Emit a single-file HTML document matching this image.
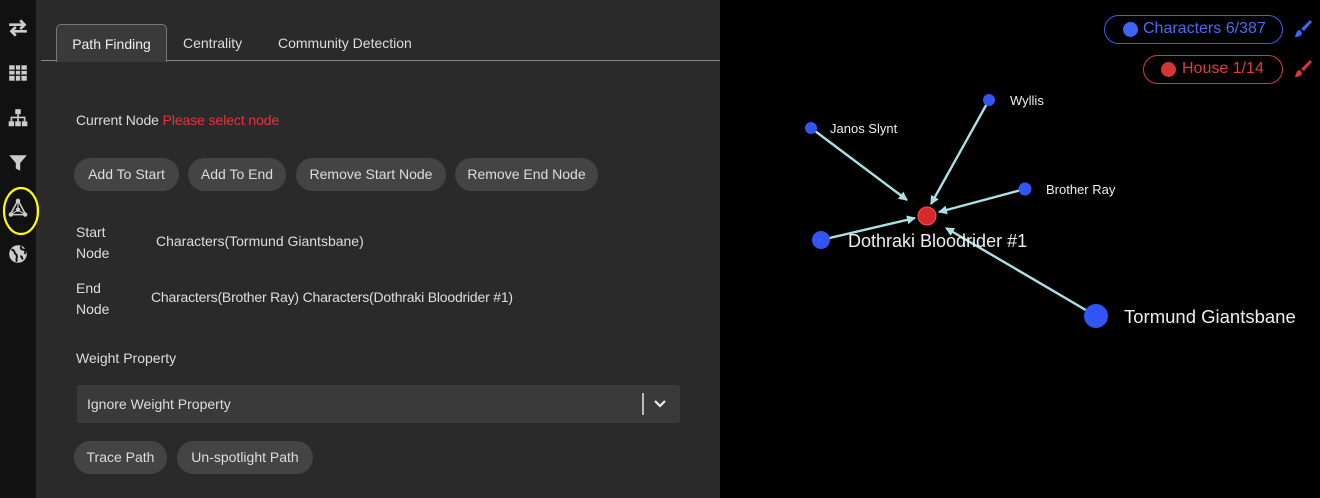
<!DOCTYPE html>
<html><head><style>
*{margin:0;padding:0;box-sizing:border-box}
body{width:1320px;height:498px;background:#000;font-family:"Liberation Sans",sans-serif;position:relative;overflow:hidden;color:#ddd}
.a{position:absolute;white-space:nowrap}
#side{left:0;top:0;width:36px;height:498px;background:#111}
#panel{left:36px;top:0;width:684px;height:498px;background:#2a2a2a}
.btn{position:absolute;height:33px;border-radius:17px;background:#444;color:#ddd;font-size:14px;line-height:33px;text-align:center}
.t{font-size:14px;color:#ddd}
.ico{position:absolute;left:7px;width:22px;height:22px}
</style></head><body>
<div class="a" id="side"></div>
<div class="a" id="panel"></div>
<svg class="ico" style="top:17px" viewBox="0 0 20 20"><path d="M2 7h14M12 3l4 4-4 4M18 13H4M8 9l-4 4 4 4" stroke="#ccc" stroke-width="2.4" fill="none"/></svg>
<svg class="ico" style="top:62px" viewBox="0 0 20 20"><rect x="2" y="3" width="16" height="14" fill="#ccc"/><path d="M2 7.5h16M2 12h16M7.5 3v14M12.5 3v14" stroke="#111" stroke-width="1.2"/></svg>
<svg class="ico" style="top:107px" viewBox="0 0 20 20"><rect x="7.5" y="2" width="5" height="4.5" fill="#ccc"/><path d="M10 6.5v3M4 13V9.5h12V13M10 9.5V13" stroke="#ccc" stroke-width="1.5" fill="none"/><rect x="1.5" y="13" width="5" height="4.5" fill="#ccc"/><rect x="7.5" y="13" width="5" height="4.5" fill="#ccc"/><rect x="13.5" y="13" width="5" height="4.5" fill="#ccc"/></svg>
<svg class="ico" style="top:152px" viewBox="0 0 20 20"><path d="M2 3h16l-6 7v7l-4-2v-5z" fill="#ccc"/></svg>
<svg class="ico" style="top:197px" viewBox="0 0 20 20"><path d="M10 3L3 16h14z" stroke="#ccc" stroke-width="1.4" fill="none"/><path d="M10 3L10 12M3 16L10 12M17 16L10 12" stroke="#ccc" stroke-width="1"/><circle cx="10" cy="3.5" r="2" fill="#ccc"/><circle cx="3.5" cy="16" r="2" fill="#ccc"/><circle cx="16.5" cy="16" r="2" fill="#ccc"/><circle cx="10" cy="11.5" r="2" fill="#ccc"/></svg>
<svg class="a" style="left:2px;top:186px" width="38" height="50"><ellipse cx="19" cy="25" rx="17" ry="23" stroke="#ffff00" stroke-width="2.2" fill="none"/></svg>
<svg class="ico" style="top:243px" viewBox="0 0 20 20"><circle cx="10" cy="10" r="8" fill="#ccc"/><path d="M4 6c2 0 3 2 3 3s2 1 2 3-1 3 0 5M13 3c-1 2 0 3 2 3s2 2 1 4M12 12c1 0 2 1 2 3" stroke="#111" stroke-width="1.8" fill="none"/></svg>
<div class="a" style="left:41px;top:60px;width:679px;height:1px;background:#888"></div>
<div class="a" style="left:56px;top:24px;width:111px;height:38px;background:#3a3a3a;border:1px solid #777;border-bottom:none;border-radius:5px 5px 0 0;font-size:14px;color:#eee;text-align:center;line-height:38px">Path Finding</div>
<div class="a t" style="left:183px;top:35px">Centrality</div>
<div class="a t" style="left:278px;top:35px">Community Detection</div>
<div class="a t" style="left:76px;top:112px;letter-spacing:-0.1px">Current Node <span style="color:#e8323c">Please select node</span></div>
<div class="btn" style="left:74px;top:158px;width:105px">Add To Start</div>
<div class="btn" style="left:188px;top:158px;width:98px">Add To End</div>
<div class="btn" style="left:296px;top:158px;width:150px">Remove Start Node</div>
<div class="btn" style="left:455px;top:158px;width:143px">Remove End Node</div>
<div class="a t" style="left:76px;top:222px;line-height:21px">Start<br>Node</div>
<div class="a t" style="left:156px;top:233px">Characters(Tormund Giantsbane)</div>
<div class="a t" style="left:76px;top:278px;line-height:21px">End<br>Node</div>
<div class="a t" style="left:151px;top:289px;letter-spacing:-0.2px">Characters(Brother Ray) Characters(Dothraki Bloodrider #1)</div>
<div class="a t" style="left:76px;top:350px">Weight Property</div>
<div class="a" style="left:77px;top:385px;width:603px;height:38px;background:#3a3a3a;border-radius:3px"></div>
<div class="a t" style="left:87px;top:396px">Ignore Weight Property</div>
<div class="a" style="left:642px;top:393px;width:2px;height:22px;background:#bbb"></div>
<svg class="a" style="left:652px;top:397px" width="16" height="14"><path d="M3 4l5 5 5-5" stroke="#eee" stroke-width="2.2" fill="none"/></svg>
<div class="btn" style="left:74px;top:441px;width:93px">Trace Path</div>
<div class="btn" style="left:177px;top:441px;width:136px">Un-spotlight Path</div>
<div class="a" style="left:1104px;top:15px;width:179px;height:29px;border:1.5px solid #3d5cf0;border-radius:15px"></div>
<div class="a" style="left:1123px;top:22px;width:15px;height:15px;border-radius:50%;background:#3d64f5"></div>
<div class="a" style="left:1143px;top:20px;font-size:16px;color:#4a6bf5">Characters 6/387</div>
<div class="a" style="left:1143px;top:55px;width:140px;height:29px;border:1.5px solid #d43a3a;border-radius:15px"></div>
<div class="a" style="left:1161px;top:62px;width:15px;height:15px;border-radius:50%;background:#d43535"></div>
<div class="a" style="left:1182px;top:60px;font-size:16px;color:#d84040">House 1/14</div>
<svg class="a" style="left:1293px;top:18px" width="20" height="22"><path d="M17 2l2 2-8 9-3-2z" fill="#3d64f5"/><path d="M7 12c-3 0-4 3-5 7 3 0 7-1 7-4z" fill="#3d64f5"/></svg>
<svg class="a" style="left:1293px;top:58px" width="20" height="22"><path d="M17 2l2 2-8 9-3-2z" fill="#d43535"/><path d="M7 12c-3 0-4 3-5 7 3 0 7-1 7-4z" fill="#d43535"/></svg>
<svg class="a" style="left:720px;top:0" width="600" height="498" viewBox="720 0 600 498">
<defs><marker id="m" markerWidth="9" markerHeight="9" refX="8" refY="4.5" orient="auto" markerUnits="userSpaceOnUse"><path d="M0 0L9 4.5 0 9z" fill="#a8e0e4"/></marker></defs>
<g stroke="#a8e0e4" stroke-width="2.4" marker-end="url(#m)">
<line x1="811" y1="128" x2="907" y2="200"/>
<line x1="989" y1="100" x2="931" y2="204"/>
<line x1="1025" y1="189" x2="939" y2="212"/>
<line x1="821" y1="240" x2="915" y2="218"/>
<line x1="1096" y1="316" x2="946" y2="228"/>
</g>
<circle cx="811" cy="128" r="6" fill="#3355f5"/>
<circle cx="989" cy="100" r="6" fill="#3355f5"/>
<circle cx="1025" cy="189" r="6.5" fill="#3355f5"/>
<circle cx="927" cy="216" r="9" fill="#d62a2a" stroke="#ff5050" stroke-width="1"/>
<circle cx="821" cy="240" r="9" fill="#3355f5"/>
<circle cx="1096" cy="316" r="12" fill="#3355f5"/>
<g fill="#eee" font-family="Liberation Sans, sans-serif">
<text x="830" y="133" font-size="13">Janos Slynt</text>
<text x="1010" y="105" font-size="13">Wyllis</text>
<text x="1046" y="194" font-size="13">Brother Ray</text>
<text x="848" y="247" font-size="18">Dothraki Bloodrider #1</text>
<text x="1124" y="323" font-size="18.5">Tormund Giantsbane</text>
</g>
</svg>
</body></html>
